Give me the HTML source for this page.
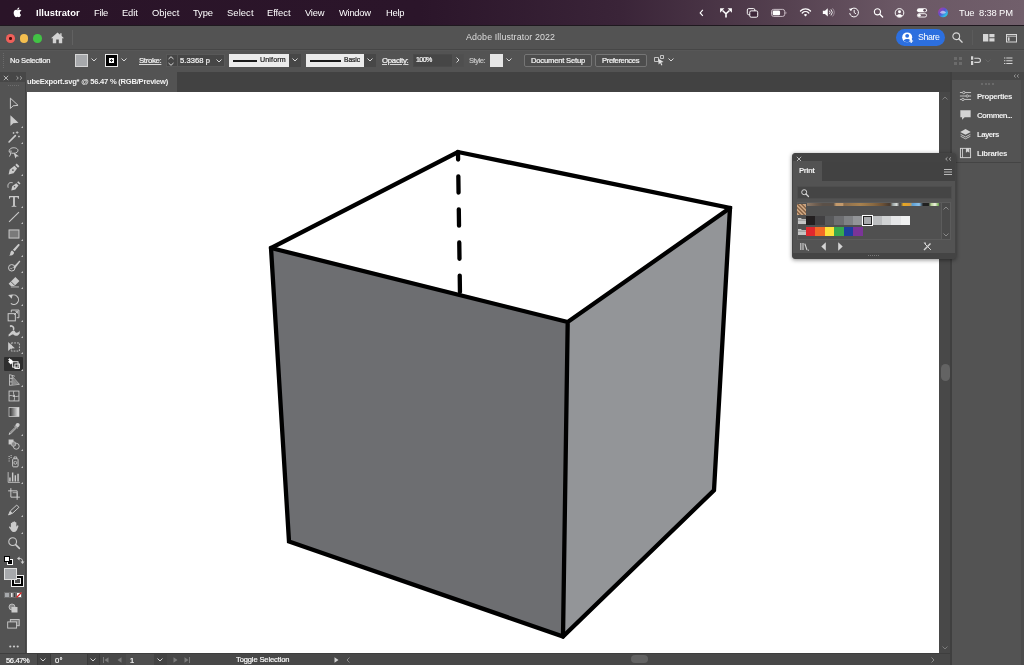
<!DOCTYPE html>
<html lang="en">
<head>
<meta charset="utf-8">
<title>Adobe Illustrator 2022</title>
<style>
*{box-sizing:border-box;margin:0;padding:0}
html,body{width:1024px;height:665px;overflow:hidden;background:#535353}
body{position:relative;font-family:"Liberation Sans",sans-serif;color:#e6e6e6;font-size:8px;-webkit-font-smoothing:antialiased}
.abs{position:absolute}
.t{position:absolute;white-space:nowrap;line-height:1;will-change:transform}
svg{position:absolute;overflow:visible}
/* ---------- mac menubar ---------- */
#menubar{left:0;top:0;width:1024px;height:25px;background:linear-gradient(90deg,#2a1428 0px,#2b152a 420px,#3a2438 620px,#54404f 780px,#6b5865 900px,#715f6b 1024px)}
#menubar .t{top:7px;font-size:9.6px;color:#fff;font-weight:400}
#menubar .b{font-weight:700}
/* ---------- title bar ---------- */
#titlebar{left:0;top:25px;width:1024px;height:24px;background:#535353;border-top:1px solid #1f181f}
/* ---------- control bar ---------- */
#controlbar{left:0;top:49px;width:1024px;height:23px;background:#535353;box-shadow:inset 0 1px 0 #464646, inset 0 2px 0 #575757}
#menubar svg{transform:translateY(.4px) scale(.88)}
#dock svg{transform:scale(.86)}
#controlbar .t{font-size:7.6px;color:#f4f4f4;top:8px;-webkit-text-stroke:.22px currentColor}
.fld{position:absolute;background:#464646;border:1px solid #585858;height:13px;top:5px}
.wbox{position:absolute;background:#ebebeb;height:13px;top:5px}
.btn{position:absolute;border:1px solid #757575;border-radius:2px;height:13px;top:5px;background:#4d4d4d}
.u{text-decoration:underline;text-decoration-thickness:.7px;text-underline-offset:1.2px;text-decoration-color:#d8d8d8}
/* ---------- tab bar ---------- */
#tabbar{left:0;top:72px;width:1024px;height:20px;background:#424242}
#tab{left:26px;top:0;width:151px;height:20px;background:#535353}
/* ---------- toolbar ---------- */
#tools{left:0;top:72px;width:26px;height:581px;background:#535353;border-right:1px solid #444}
#tools svg[width="16"]{transform:scale(.9)}
#toolhead{left:0;top:0;width:26px;height:10px;background:#474747}
/* ---------- canvas ---------- */
#canvas{left:27px;top:92px;width:912px;height:561px;background:#fff;overflow:hidden}
/* ---------- scrollbars / status ---------- */
#vscroll{left:939px;top:92px;width:11px;height:573px;background:#484848}
#status{left:0;top:653px;width:951px;height:12px;background:#484848;overflow:hidden}
#status .t{font-size:7.6px;top:3px;color:#fafafa;-webkit-text-stroke:.2px currentColor}
/* ---------- right dock ---------- */
#dock{left:950px;top:72px;width:74px;height:593px;background:#535353;border-left:2px solid #3f3f3f}
#dock .t{font-size:7.8px;font-weight:700;color:#f0f0f0}
/* ---------- floating panel ---------- */
#panel{left:792px;top:153px;width:164px;height:106px;background:#535353;box-shadow:0 1px 4px rgba(0,0,0,.45);border:1px solid #444;border-radius:3px}
</style>
</head>
<body>

<!-- ================= macOS menu bar ================= -->
<div id="menubar" class="abs">
  <svg style="left:13px;top:5.500px" width="9.500" height="12" viewBox="-8 -3 180 212"><path fill="#fff" d="M150 72c-9 6-22 18-22 42 0 28 24 38 25 38-1 3-5 16-14 29-8 12-17 24-30 24s-17-8-32-8c-15 0-20 8-32 8s-21-11-31-25C3 164-6 137-6 111c0-42 27-64 54-64 14 0 26 9 35 9 8 0 22-10 38-10 6 0 28 1 43 22zM103 33c7-8 11-19 11-30 0-2 0-3-1-4-11 0-24 7-31 16-6 7-12 18-12 29 0 2 0 3 1 4h3c10 0 22-7 29-15z"/></svg>
  <span class="t b" style="left:36.0px;top:7.5px;font-size:9.4px;letter-spacing:0.03px;font-weight:700">Illustrator</span>
  <span class="t" style="left:93.8px;top:7.5px;font-size:9.4px;letter-spacing:-0.29px">File</span>
  <span class="t" style="left:122.0px;top:7.5px;font-size:9.4px;letter-spacing:-0.14px">Edit</span>
  <span class="t" style="left:151.8px;top:7.5px;font-size:9.4px;letter-spacing:0.03px">Object</span>
  <span class="t" style="left:193.0px;top:7.5px;font-size:9.4px;letter-spacing:-0.11px">Type</span>
  <span class="t" style="left:226.5px;top:7.5px;font-size:9.4px;letter-spacing:0.09px">Select</span>
  <span class="t" style="left:266.5px;top:7.5px;font-size:9.4px;letter-spacing:-0.06px">Effect</span>
  <span class="t" style="left:305.0px;top:7.5px;font-size:9.4px;letter-spacing:-0.22px">View</span>
  <span class="t" style="left:339.0px;top:7.5px;font-size:9.4px;letter-spacing:-0.27px">Window</span>
  <span class="t" style="left:385.5px;top:7.5px;font-size:9.4px;letter-spacing:-0.26px">Help</span>
  <svg style="left:699px;top:8px" width="5" height="9" viewBox="0 0 5 9"><path d="M4 1 1 4.500 4 8" fill="none" stroke="#fff" stroke-width="1.300"/></svg>
  <svg style="left:719px;top:7px" width="14" height="11" viewBox="0 0 14 11"><path d="M7 10.800V6.500L3 2.800M7 6.500l4-3.700" fill="none" stroke="#fff" stroke-width="1.800"/><path d="M.3 5.200V.3h4.900zM13.700 5.200V.3H8.800z" fill="#fff"/></svg>
  <svg style="left:746px;top:7px" width="13" height="11" viewBox="0 0 13 11"><rect x=".6" y=".6" width="8.600" height="7" rx="1.600" fill="none" stroke="#fff" stroke-width="1.100"/><rect x="3.400" y="3.200" width="9" height="7.200" rx="1.600" fill="#3d2739" stroke="#fff" stroke-width="1.100"/></svg>
  <svg style="left:770px;top:8px" width="18" height="9" viewBox="0 0 18 9"><rect x=".5" y=".5" width="15" height="8" rx="2.400" fill="none" stroke="#d8ccd4" stroke-width="1"/><rect x="1.800" y="1.800" width="8.400" height="5.400" rx="1.300" fill="#fff"/><path d="M16.500 3v3c1.200-.4 1.200-2.600 0-3z" fill="#d8ccd4"/></svg>
  <svg style="left:799px;top:7px" width="13" height="10" viewBox="0 0 13 10"><path d="M.8 3.400a8.200 8.200 0 0 1 11.400 0M2.800 5.600a5.400 5.400 0 0 1 7.400 0" fill="none" stroke="#fff" stroke-width="1.500" stroke-linecap="round"/><path d="M4.600 7.600a2.800 2.800 0 0 1 3.800 0L6.500 9.600z" fill="#fff"/></svg>
  <svg style="left:822px;top:7px" width="14" height="10" viewBox="0 0 14 10"><path d="M0 3.200h2.400L5.600.4v9.200L2.400 6.800H0z" fill="#fff"/><path d="M7.400 3a3 3 0 0 1 0 4M9.200 1.600a5 5 0 0 1 0 6.800" fill="none" stroke="#fff" stroke-width="1"/><path d="M11 .4a7 7 0 0 1 0 9.200" fill="none" stroke="#a99aa5" stroke-width="1"/></svg>
  <svg style="left:848px;top:6px" width="12" height="12" viewBox="0 0 12 12"><path d="M2 3.200a5 5 0 1 1-.9 3.600" fill="none" stroke="#fff" stroke-width="1.100"/><path d="M.2 1.800 2.600 4.600 4.400 1.600z" fill="#fff"/><path d="M6.200 3.200v3l2 1.400" fill="none" stroke="#fff" stroke-width="1.100"/></svg>
  <svg style="left:873px;top:7px" width="11" height="11" viewBox="0 0 11 11"><circle cx="4.300" cy="4.300" r="3.500" fill="none" stroke="#fff" stroke-width="1.300"/><path d="M7 7l3.200 3.200" stroke="#fff" stroke-width="1.500" stroke-linecap="round"/></svg>
  <svg style="left:894px;top:7px" width="11" height="11" viewBox="0 0 11 11"><circle cx="5.500" cy="5.500" r="4.900" fill="none" stroke="#fff" stroke-width="1.100"/><circle cx="5.500" cy="4.200" r="1.700" fill="#fff"/><path d="M2.400 8.800c.6-2.400 5.600-2.400 6.200 0a4.600 4.600 0 0 1-6.200 0z" fill="#fff"/></svg>
  <svg style="left:916px;top:7px" width="12" height="11" viewBox="0 0 12 11"><rect x=".3" y=".3" width="11.400" height="4.600" rx="2.300" fill="#fff"/><circle cx="9" cy="2.600" r="1.500" fill="#5b4756"/><rect x=".8" y="6.400" width="10.400" height="3.800" rx="1.900" fill="none" stroke="#fff" stroke-width="1"/><circle cx="3" cy="8.300" r="1.600" fill="#fff"/></svg>
  <svg style="left:937px;top:6px" width="12" height="12" viewBox="0 0 12 12"><defs><linearGradient id="siri" x1="0" y1="0" x2="1" y2="1"><stop offset="0" stop-color="#c43a8e"/><stop offset=".45" stop-color="#5a4fd6"/><stop offset=".75" stop-color="#2fb6e8"/><stop offset="1" stop-color="#3fe0b0"/></linearGradient></defs><circle cx="6" cy="6" r="5.600" fill="url(#siri)"/><path d="M2.500 6.500c2-3 4.500-3 7 0-2.500 1.500-5 1.500-7 0z" fill="#fff" opacity=".55"/></svg>
  <span class="t" style="left:958.5px;top:7.5px;font-size:9.4px;letter-spacing:-0.18px">Tue&nbsp; 8:38 PM</span>
</div>

<!-- ================= title bar ================= -->
<div id="titlebar" class="abs">
  <div class="abs" style="left:6px;top:8px;width:8.500px;height:8.500px;border-radius:50%;background:#f0605a"></div>
  <div class="abs" style="left:9px;top:11px;width:2.500px;height:2.500px;border-radius:50%;background:#4a0d0a"></div>
  <div class="abs" style="left:19.700px;top:8px;width:8.500px;height:8.500px;border-radius:50%;background:#f5bf4f"></div>
  <div class="abs" style="left:33px;top:8px;width:8.500px;height:8.500px;border-radius:50%;background:#42c345"></div>
  <svg style="left:51px;top:6px" width="13" height="12" viewBox="0 0 13 12"><path d="M6.5 .4 0 6.2h1.8V11.3h3.4V7.6h2.6v3.7h3.4V6.2H13L10.6 4V1.2H9.2v1.6z" fill="#d2d2d2"/></svg>
  <div class="abs" style="left:72px;top:4px;width:1px;height:15px;background:#616161"></div>
  <span class="t" style="left:465.8px;top:7.2px;font-size:8.9px;letter-spacing:0.10px;color:#dcdcdc">Adobe Illustrator 2022</span>
  <!-- share -->
  <div class="abs" style="left:896px;top:2.500px;width:49px;height:17.500px;border-radius:9px;background:#2c6fdf"></div>
  <svg style="left:901.500px;top:5.500px" width="11.500" height="11.500" viewBox="0 0 12 12"><circle cx="5.4" cy="5.6" r="5.2" fill="#fff"/><circle cx="5.4" cy="4" r="2" fill="#2c6fdf"/><path d="M1.8 9.2c.5-2.6 6.700-2.600 7.200 0a5.200 5.200 0 0 1-7.200 0z" fill="#2c6fdf"/><path d="M9.600 7.400v4M7.600 9.400h4" stroke="#fff" stroke-width="1.200"/></svg>
  <span class="t" style="left:917.5px;top:7.4px;font-size:8.8px;letter-spacing:-0.42px;color:#fff">Share</span>
  <svg style="left:952px;top:6px" width="11" height="11" viewBox="0 0 13 13"><circle cx="5" cy="5" r="4" fill="none" stroke="#d6d6d6" stroke-width="1.300"/><path d="M8 8l4 4" stroke="#d6d6d6" stroke-width="1.600" stroke-linecap="round"/></svg>
  <div class="abs" style="left:972px;top:4px;width:1px;height:15px;background:#5b5b5b"></div>
  <svg style="left:982.500px;top:8px" width="11.500" height="7.500" viewBox="0 0 13 9" preserveAspectRatio="none"><path d="M0 0h6v9h-6zM7.200 0h5.800v4h-5.800zM7.200 5h5.800v4h-5.800z" fill="#d6d6d6"/></svg>
  <svg style="left:1006px;top:7.500px" width="11" height="8.500" viewBox="0 0 13 10" preserveAspectRatio="none"><rect x=".6" y=".6" width="11.800" height="8.800" fill="none" stroke="#d6d6d6" stroke-width="1.200"/><path d="M.6 2.600h11.800" stroke="#d6d6d6" stroke-width="1"/><path d="M2.200 4h2v4h-2z" fill="#d6d6d6"/></svg>
</div>

<!-- ================= control bar ================= -->
<div id="controlbar" class="abs">
  <div class="abs" style="left:3px;top:4px;width:2px;height:15px;border-left:1px dotted #6a6a6a"></div>
  <span class="t" style="left:10.4px;top:7.6px;font-size:7.6px;letter-spacing:-0.24px">No Selection</span>
  <!-- fill swatch -->
  <div class="abs" style="left:75px;top:5px;width:13px;height:13px;background:#a7a9ac;border:1px solid #d6d6d6"></div>
  <svg class="chev" style="left:91px;top:9px" width="6" height="4" viewBox="0 0 6 4"><path d="M.5 .5 3 3 5.5 .5" fill="none" stroke="#d8d8d8" stroke-width="1"/></svg>
  <!-- stroke swatch -->
  <div class="abs" style="left:105px;top:5px;width:13px;height:13px;background:#000;border:1px solid #e8e8e8"></div>
  <div class="abs" style="left:109px;top:9px;width:5px;height:5px;background:#fff"></div>
  <div class="abs" style="left:110px;top:11px;width:3px;height:1px;background:#333"></div>
  <div class="abs" style="left:111px;top:10px;width:1px;height:3px;background:#333"></div>
  <svg style="left:121px;top:9px" width="6" height="4" viewBox="0 0 6 4"><path d="M.5 .5 3 3 5.5 .5" fill="none" stroke="#d8d8d8" stroke-width="1"/></svg>
  <span class="t u" style="left:139.0px;top:7.7px;font-size:7.8px;letter-spacing:-0.33px">Stroke:</span>
  <!-- stepper + field -->
  <div class="fld" style="left:166px;width:11px;border-right:none"></div>
  <svg style="left:168px;top:7px" width="6" height="10" viewBox="0 0 6 10"><path d="M.5 3 3 .7 5.5 3M.5 7 3 9.3 5.5 7" fill="none" stroke="#d8d8d8" stroke-width="1"/></svg>
  <div class="fld" style="left:177px;width:36px"></div>
  <span class="t" style="left:180.0px;top:7.6px;font-size:7.6px;letter-spacing:0.06px">5.3368 p</span>
  <div class="fld" style="left:212px;width:13px;border-left:none"></div>
  <svg style="left:216px;top:9.500px" width="6" height="4" viewBox="0 0 6 4"><path d="M.5 .5 3 3 5.5 .5" fill="none" stroke="#d8d8d8" stroke-width="1"/></svg>
  <!-- uniform -->
  <div class="abs" style="left:289px;top:5px;width:12px;height:13px;background:#474747"></div>
  <div class="abs" style="left:364px;top:5px;width:12px;height:13px;background:#474747"></div>
  <div class="wbox" style="left:229px;width:60px"></div>
  <div class="abs" style="left:233px;top:11px;width:23.500px;height:1.500px;background:#1a1a1a"></div>
  <span class="t" style="left:259.8px;top:8.2px;font-size:7.1px;letter-spacing:0.15px;color:#222">Uniform</span>
  <svg style="left:292px;top:9px" width="6" height="4" viewBox="0 0 6 4"><path d="M.5 .5 3 3 5.5 .5" fill="none" stroke="#d8d8d8" stroke-width="1"/></svg>
  <!-- basic -->
  <div class="wbox" style="left:306px;width:58px"></div>
  <div class="abs" style="left:309.500px;top:10.500px;width:31.500px;height:2px;background:#1a1a1a"></div>
  <span class="t" style="left:343.6px;top:8.4px;font-size:6.7px;letter-spacing:-0.05px;color:#222">Basic</span>
  <svg style="left:367px;top:9px" width="6" height="4" viewBox="0 0 6 4"><path d="M.5 .5 3 3 5.5 .5" fill="none" stroke="#d8d8d8" stroke-width="1"/></svg>
  <span class="t u" style="left:382.0px;top:7.7px;font-size:7.8px;letter-spacing:-0.27px">Opacity:</span>
  <div class="fld" style="left:413px;width:40px;border-color:#4a4a4a"></div>
  <span class="t" style="left:416.0px;top:8.1px;font-size:7.1px;letter-spacing:-0.62px">100%</span>
  <div class="fld" style="left:452px;width:12px;border-color:#505050;background:#4f4f4f"></div>
  <svg style="left:456px;top:8px" width="4" height="6" viewBox="0 0 4 6"><path d="M.5 .5 3 3 .5 5.5" fill="none" stroke="#d8d8d8" stroke-width="1"/></svg>
  <span class="t" style="left:468.5px;top:7.6px;font-size:7.6px;letter-spacing:-0.50px;color:#c4c4c4">Style:</span>
  <div class="abs" style="left:490px;top:5px;width:13px;height:13px;background:#e6e6e6"></div>
  <svg style="left:506px;top:9px" width="6" height="4" viewBox="0 0 6 4"><path d="M.5 .5 3 3 5.5 .5" fill="none" stroke="#d8d8d8" stroke-width="1"/></svg>
  <div class="btn" style="left:524px;width:68px"></div>
  <span class="t" style="left:530.8px;top:7.7px;font-size:7.6px;letter-spacing:-0.18px">Document Setup</span>
  <div class="btn" style="left:595px;width:52px"></div>
  <span class="t" style="left:602.0px;top:7.7px;font-size:7.6px;letter-spacing:-0.35px">Preferences</span>
  <!-- select-similar icon -->
  <svg style="left:654px;top:6px" width="11" height="11" viewBox="0 0 11 11"><path d="M.5 2.5h4v4h-4z M6.5 .5h3v3h-3z" fill="none" stroke="#cfcfcf" stroke-width=".9"/><path d="M4.2 3.6 9.6 7 7.2 7.4 8.4 10 7.4 10.4 6.2 7.9 4.6 9.4z" fill="#e0e0e0"/></svg>
  <svg style="left:668px;top:9px" width="6" height="4" viewBox="0 0 6 4"><path d="M.5 .5 3 3 5.5 .5" fill="none" stroke="#d8d8d8" stroke-width="1"/></svg>
  <!-- right side icons -->
  <svg style="left:954px;top:8px" width="8" height="8" viewBox="0 0 8 8"><path d="M0 0h3v3h-3zM5 0h3v3h-3zM0 5h3v3h-3zM5 5h3v3h-3z" fill="#6b6b6b"/></svg>
  <svg style="left:970.500px;top:7px" width="11" height="9.500" viewBox="0 0 12 10"><path d="M0 0h2.4v4h-2.4zM0 5.4h2.4v4.2h-2.4z" fill="#d6d6d6"/><path d="M3.6 2.2h4.4a2 2 0 0 1 0 4.6h-4.4" fill="none" stroke="#d6d6d6" stroke-width="1.2"/></svg>
  <svg style="left:985px;top:10px" width="6" height="4" viewBox="0 0 6 4"><path d="M.5 .5 3 3 5.5 .5" fill="none" stroke="#636363" stroke-width="1"/></svg>
  <svg style="left:1004px;top:8px" width="8.500" height="7.500" viewBox="0 0 9 8"><path d="M0 1h1.4M2.4 1H9M0 4h1.4M2.4 4H9M0 7h1.4M2.4 7H9" stroke="#d6d6d6" stroke-width="1.1"/></svg>
</div>

<!-- ================= tab bar ================= -->
<div id="tabbar" class="abs">
  <div id="tab" class="abs"></div>
  <span class="t" style="left:27.0px;top:5.8px;font-size:7.6px;letter-spacing:-0.24px;font-weight:700;color:#f2f2f2">ubeExport.svg* @ 56.47 % (RGB/Preview)</span>
</div>

<!-- ================= canvas ================= -->
<div id="canvas" class="abs">
  <svg style="left:-27px;top:-92px" width="1024" height="665" viewBox="0 0 1024 665">
    <polygon points="271,248 567.7,322 563,636.5 289,541.5" fill="#6d6e71"/>
    <polygon points="567.7,322 730,208 714,490.3 563,636.5" fill="#939598"/>
    <g fill="none" stroke="#000" stroke-width="4.3" stroke-linejoin="miter" stroke-linecap="round">
      <polygon points="458,152 730,208 714,490.3 563,636.5 289,541.5 271,248"/>
      <path d="M271 248 567.7 322 730 208M567.7 322 563 636.5"/>
      <line x1="458" y1="152" x2="460" y2="295" stroke-dasharray="16.3 16.8" stroke-dashoffset="8.8"/>
    </g>
  </svg>
</div>

<!-- ================= scrollbars + status ================= -->
<div id="vscroll" class="abs">
  <svg style="left:2.500px;top:4px" width="6" height="4" viewBox="0 0 6 4"><path d="M.5 3.500 3 1 5.500 3.500" fill="none" stroke="#7c7c7c" stroke-width="1"/></svg>
  <svg style="left:2.500px;top:554px" width="6" height="4" viewBox="0 0 6 4"><path d="M.5 .5 3 3 5.500 .5" fill="none" stroke="#7c7c7c" stroke-width="1"/></svg>
  <div class="abs" style="left:2px;top:272px;width:9px;height:17px;border-radius:4.5px;background:#636363"></div>
</div>
<div id="status" class="abs">
  <div class="abs" style="left:0;top:0;width:951px;height:1px;background:#3e3e3e"></div>
  <div class="abs" style="left:0;top:1px;width:37px;height:11px;background:#4e4e4e"></div>
  <div class="abs" style="left:37px;top:1px;width:14px;height:11px;background:#434343;border-left:1px solid #3a3a3a;border-right:1px solid #3a3a3a"></div>
  <div class="abs" style="left:51px;top:1px;width:36px;height:11px;background:#4e4e4e"></div>
  <div class="abs" style="left:87px;top:1px;width:13px;height:11px;background:#434343;border-left:1px solid #3a3a3a;border-right:1px solid #3a3a3a"></div>
  <div class="abs" style="left:126px;top:1px;width:28px;height:11px;background:#4e4e4e"></div>
  <div class="abs" style="left:154px;top:1px;width:13px;height:11px;background:#434343"></div>
  <svg style="left:40px;top:5px" width="6" height="4" viewBox="0 0 6 4"><path d="M.5 .5 3 3 5.500 .5" fill="none" stroke="#d0d0d0" stroke-width="1"/></svg>
  <svg style="left:89.5px;top:5px" width="6" height="4" viewBox="0 0 6 4"><path d="M.5 .5 3 3 5.500 .5" fill="none" stroke="#d0d0d0" stroke-width="1"/></svg>
  <svg style="left:157px;top:5px" width="6" height="4" viewBox="0 0 6 4"><path d="M.5 .5 3 3 5.500 .5" fill="none" stroke="#d0d0d0" stroke-width="1"/></svg>
  <svg style="left:103px;top:4px" width="6" height="6" viewBox="0 0 6 6"><path d="M.5 0v6" stroke="#7a7a7a" stroke-width="1"/><path d="M5.500 .3v5.400L1.500 3z" fill="#7a7a7a"/></svg>
  <svg style="left:117px;top:4px" width="5" height="6" viewBox="0 0 5 6"><path d="M4.500 .3v5.400L.5 3z" fill="#7a7a7a"/></svg>
  <svg style="left:173px;top:4px" width="5" height="6" viewBox="0 0 5 6"><path d="M.5 .3v5.400L4.500 3z" fill="#7a7a7a"/></svg>
  <svg style="left:184px;top:4px" width="6" height="6" viewBox="0 0 6 6"><path d="M5.500 0v6" stroke="#7a7a7a" stroke-width="1"/><path d="M.5 .3v5.400L4.500 3z" fill="#7a7a7a"/></svg>
  <svg style="left:334px;top:4px" width="5" height="6" viewBox="0 0 5 6"><path d="M.5 .3v5.400L4.500 3z" fill="#d0d0d0"/></svg>
  <svg style="left:346px;top:4px" width="4" height="6" viewBox="0 0 4 6"><path d="M3.500 .5 1 3 3.500 5.500" fill="none" stroke="#8a8a8a" stroke-width="1"/></svg>
  <svg style="left:931px;top:4px" width="4" height="6" viewBox="0 0 4 6"><path d="M.5 .5 3 3 .5 5.500" fill="none" stroke="#8a8a8a" stroke-width="1"/></svg>
  <span class="t" style="left:5.6px;top:3.5px;font-size:7.5px;letter-spacing:-0.35px">56.47%</span>
  <span class="t" style="left:54.7px;top:3.5px;font-size:7.6px;letter-spacing:0.33px">0°</span>
  <span class="t" style="left:130.3px;top:3.5px;font-size:7.6px;letter-spacing:-0.73px">1</span>
  <span class="t" style="left:235.5px;top:3.4px;font-size:7.6px;letter-spacing:-0.15px">Toggle Selection</span>
  <div class="abs" style="left:631px;top:2px;width:17px;height:8px;border-radius:4px;background:#636363"></div>
</div>

<!-- ================= tools ================= -->
<div id="tools" class="abs">
  <div id="toolhead" class="abs"></div>
  <div class="abs" style="left:4px;top:285px;width:19px;height:14px;background:#2e2e2e;border-radius:1px"></div>
  <svg style="left:5.5px;top:24.0px" width="16" height="16" viewBox="0 0 16 16"><path d="M4 1.500 4 13 7 10 12.500 9.500z" fill="none" stroke="#cbcbcb" stroke-width="1.100" stroke-linejoin="round"/></svg>
  <svg style="left:5.5px;top:40.5px" width="16" height="16" viewBox="0 0 16 16"><path d="M4 1.500 4 13.500 7.200 10.400 13 10z" fill="#cbcbcb"/></svg>
  <svg style="left:21px;top:53.5px" width="2" height="2" viewBox="0 0 2 2"><path d="M2 0v2H0z" fill="#bdbdbd"/></svg>
  <svg style="left:5.5px;top:56.8px" width="16" height="16" viewBox="0 0 16 16"><path d="M2.500 13.500 9.500 6.500" stroke="#cbcbcb" stroke-width="1.800" stroke-linecap="round"/><path d="M11.500 1.500v3M10 3h3M13.500 6.500v2M12.500 7.500h2M7.500 2.500v2M6.500 3.500h2" stroke="#cbcbcb" stroke-width=".9"/></svg>
  <svg style="left:21px;top:69.8px" width="2" height="2" viewBox="0 0 2 2"><path d="M2 0v2H0z" fill="#bdbdbd"/></svg>
  <svg style="left:5.5px;top:72.7px" width="16" height="16" viewBox="0 0 16 16"><path d="M3 7.500C1.500 4 5 1.800 8.500 2.200S13.500 5 11.500 7 5.500 8.500 4 7.500 3.500 5.500 5.500 6" fill="none" stroke="#cbcbcb" stroke-width="1.100"/><path d="M7.500 7.500 13.500 11.500 10.800 11.800 9.600 14.200z" fill="#cbcbcb"/><path d="M4 8c.8 1.500-.2 3-1.500 4" fill="none" stroke="#cbcbcb" stroke-width="1"/></svg>
  <svg style="left:5.5px;top:88.6px" width="16" height="16" viewBox="0 0 16 16"><path d="M2 14 3.200 8.500 8.500 4.500 11.500 7.500 7.500 12.800z" fill="#cbcbcb"/><path d="M9.500 3.500 11 2 14 5 12.500 6.500z" fill="#cbcbcb"/><circle cx="6.800" cy="9.200" r="1" fill="#535353"/></svg>
  <svg style="left:21px;top:101.6px" width="2" height="2" viewBox="0 0 2 2"><path d="M2 0v2H0z" fill="#bdbdbd"/></svg>
  <svg style="left:5.5px;top:104.9px" width="16" height="16" viewBox="0 0 16 16"><path d="M5 14 6 9.500 10.500 6 13 8.500 9.500 13z" fill="#cbcbcb"/><path d="M11.500 5 12.800 3.700 15.200 6.200 14 7.500z" fill="#cbcbcb"/><path d="M1.500 11C.5 7 2.500 4.500 6.500 5.500" fill="none" stroke="#cbcbcb" stroke-width="1.100"/><circle cx="8.600" cy="10" r=".9" fill="#535353"/></svg>
  <svg style="left:5.5px;top:121.4px" width="16" height="16" viewBox="0 0 16 16"><path d="M2.500 2.500h11v3h-1l-.6-1.700H9v9.400l1.600.4v.9H5.400v-.9l1.600-.4V3.800H3.900L3.300 5.500h-.8z" fill="#cbcbcb"/></svg>
  <svg style="left:21px;top:134.4px" width="2" height="2" viewBox="0 0 2 2"><path d="M2 0v2H0z" fill="#bdbdbd"/></svg>
  <svg style="left:5.5px;top:137.4px" width="16" height="16" viewBox="0 0 16 16"><path d="M2.500 13.500 13.500 2.500" stroke="#cbcbcb" stroke-width="1.200"/></svg>
  <svg style="left:21px;top:150.4px" width="2" height="2" viewBox="0 0 2 2"><path d="M2 0v2H0z" fill="#bdbdbd"/></svg>
  <svg style="left:5.5px;top:153.9px" width="16" height="16" viewBox="0 0 16 16"><rect x="2.500" y="3.500" width="11" height="9" fill="#7a7a7a" stroke="#cbcbcb" stroke-width="1.100"/></svg>
  <svg style="left:21px;top:166.9px" width="2" height="2" viewBox="0 0 2 2"><path d="M2 0v2H0z" fill="#bdbdbd"/></svg>
  <svg style="left:5.5px;top:169.8px" width="16" height="16" viewBox="0 0 16 16"><path d="M13.800 1.500c.6.500.6 1 .2 1.600L8.800 9.500 6.800 7.800 12.500 1.700c.400-.5.900-.5 1.300-.2z" fill="#cbcbcb"/><path d="M6 8.600 8 10.400c.4 2-1.400 4-5.500 3.800 1.400-.8 1.200-2 1.500-3.200.3-1.200 1-2.200 2-2.400z" fill="#cbcbcb"/></svg>
  <svg style="left:21px;top:182.8px" width="2" height="2" viewBox="0 0 2 2"><path d="M2 0v2H0z" fill="#bdbdbd"/></svg>
  <svg style="left:5.5px;top:186.0px" width="16" height="16" viewBox="0 0 16 16"><circle cx="5.500" cy="10" r="3.600" fill="none" stroke="#cbcbcb" stroke-width="1.100"/><path d="M7 9.500 13.800 2.300c.5-.5 1.500.3 1 1L8.800 11z" fill="#cbcbcb"/><path d="M3.800 10.500c1 .8 2.200.4 2.600-.6" fill="none" stroke="#cbcbcb" stroke-width=".9"/></svg>
  <svg style="left:21px;top:199.0px" width="2" height="2" viewBox="0 0 2 2"><path d="M2 0v2H0z" fill="#bdbdbd"/></svg>
  <svg style="left:5.5px;top:202.0px" width="16" height="16" viewBox="0 0 16 16"><path d="M2 10 9.500 2.500 14 7 8.500 12.500H4.500z" fill="#cbcbcb"/><path d="M4.500 7.500 9 12" stroke="#535353" stroke-width="1"/><path d="M4.500 13.500h9" stroke="#cbcbcb" stroke-width="1"/></svg>
  <svg style="left:21px;top:215.0px" width="2" height="2" viewBox="0 0 2 2"><path d="M2 0v2H0z" fill="#bdbdbd"/></svg>
  <svg style="left:5.5px;top:218.6px" width="16" height="16" viewBox="0 0 16 16"><path d="M4.200 5A5.200 5.200 0 1 1 4.500 12.800" fill="none" stroke="#cbcbcb" stroke-width="1.200"/><path d="M1.500 3.500 6.500 3 5.500 7.800z" fill="#cbcbcb"/></svg>
  <svg style="left:21px;top:231.6px" width="2" height="2" viewBox="0 0 2 2"><path d="M2 0v2H0z" fill="#bdbdbd"/></svg>
  <svg style="left:5.5px;top:235.0px" width="16" height="16" viewBox="0 0 16 16"><rect x="1.500" y="6.500" width="8" height="8" fill="none" stroke="#cbcbcb" stroke-width="1.100"/><path d="M5 5V2.500h8.500V11H11" fill="none" stroke="#cbcbcb" stroke-width="1.100"/><path d="M8 8 12 4M12 4H9.500M12 4v2.500" fill="none" stroke="#cbcbcb" stroke-width="1"/></svg>
  <svg style="left:21px;top:248.0px" width="2" height="2" viewBox="0 0 2 2"><path d="M2 0v2H0z" fill="#bdbdbd"/></svg>
  <svg style="left:5.5px;top:251.0px" width="16" height="16" viewBox="0 0 16 16"><path d="M2 12c2-1 3-4 5-4.500 2.500-.5 2 2.500 4 2.500 1.500 0 2.500-1 3-2.500l.5 3C13 13 11 14 9 13c-1.500-.8-1.800-1.500-3-1-1.500.6-2 2-4 2z" fill="#cbcbcb"/><path d="M5.500 2.500c2 .5 2.500 2 2 4" fill="none" stroke="#cbcbcb" stroke-width="1.600" stroke-linecap="round"/><circle cx="4.500" cy="2.500" r="1.200" fill="#cbcbcb"/></svg>
  <svg style="left:21px;top:264.0px" width="2" height="2" viewBox="0 0 2 2"><path d="M2 0v2H0z" fill="#bdbdbd"/></svg>
  <svg style="left:5.5px;top:267.3px" width="16" height="16" viewBox="0 0 16 16"><rect x="5" y="3.500" width="9" height="9" fill="none" stroke="#cbcbcb" stroke-width="1" stroke-dasharray="2 1.200"/><path d="M1.500 2.500v10l3-2.800 4.500-.2z" fill="#cbcbcb"/></svg>
  <svg style="left:21px;top:280.3px" width="2" height="2" viewBox="0 0 2 2"><path d="M2 0v2H0z" fill="#bdbdbd"/></svg>
  <svg style="left:5.5px;top:283.8px" width="16" height="16" viewBox="0 0 16 16"><path d="M1.500 5.500 4.500 2.500 7.500 5.500 4.500 8.500z" fill="#fff"/><rect x="6.500" y="5.500" width="6" height="6" fill="#2e2e2e" stroke="#fff" stroke-width="1"/><rect x="9" y="8" width="5" height="5" fill="none" stroke="#fff" stroke-width="1"/><path d="M3 1.500v3M1.500 3h3" stroke="#fff" stroke-width=".8"/></svg>
  <svg style="left:21px;top:296.8px" width="2" height="2" viewBox="0 0 2 2"><path d="M2 0v2H0z" fill="#bdbdbd"/></svg>
  <svg style="left:5.5px;top:300.4px" width="16" height="16" viewBox="0 0 16 16"><path d="M3 2v12M6 2.800v10.800M3 2l6 1.800M3 6l4.500.6M3 10l3 .2M3 14l11-1.200L6 4" fill="none" stroke="#cbcbcb" stroke-width=".9"/><path d="M6.500 6 13 12.500 6.500 13.500z" fill="#8a8a8a"/></svg>
  <svg style="left:21px;top:313.4px" width="2" height="2" viewBox="0 0 2 2"><path d="M2 0v2H0z" fill="#bdbdbd"/></svg>
  <svg style="left:5.5px;top:316.3px" width="16" height="16" viewBox="0 0 16 16"><rect x="2.500" y="2.500" width="11" height="11" fill="none" stroke="#cbcbcb" stroke-width="1"/><path d="M2.500 8c3-2 5 2 11 0M8 2.500c-2 3 2 5 0 11" fill="none" stroke="#cbcbcb" stroke-width=".9"/><circle cx="8" cy="8" r="1.100" fill="#cbcbcb"/></svg>
  <svg style="left:5.5px;top:332.3px" width="16" height="16" viewBox="0 0 16 16"><defs><linearGradient id="gg" x1="0" y1="0" x2="1" y2="0"><stop offset="0" stop-color="#2a2a2a"/><stop offset="1" stop-color="#f2f2f2"/></linearGradient></defs><rect x="2.500" y="3" width="11" height="10" fill="url(#gg)" stroke="#cbcbcb" stroke-width=".9"/></svg>
  <svg style="left:5.5px;top:348.5px" width="16" height="16" viewBox="0 0 16 16"><path d="M10.500 2c1-1 2.500-.8 3.200 0 .8.800.8 2.200 0 3L12 6.700 9.300 4z" fill="#cbcbcb"/><path d="M8.500 4.500 11.500 7.500M9.500 6 3.500 12l-1 2 2-1 6-6" fill="none" stroke="#cbcbcb" stroke-width="1.100"/></svg>
  <svg style="left:21px;top:361.5px" width="2" height="2" viewBox="0 0 2 2"><path d="M2 0v2H0z" fill="#bdbdbd"/></svg>
  <svg style="left:5.5px;top:364.4px" width="16" height="16" viewBox="0 0 16 16"><rect x="2" y="3" width="5.500" height="5.500" fill="#cbcbcb"/><circle cx="10.500" cy="10.500" r="3.300" fill="none" stroke="#cbcbcb" stroke-width="1"/><circle cx="7.500" cy="8" r="2.600" fill="#8a8a8a" stroke="#cbcbcb" stroke-width=".8"/></svg>
  <svg style="left:21px;top:377.4px" width="2" height="2" viewBox="0 0 2 2"><path d="M2 0v2H0z" fill="#bdbdbd"/></svg>
  <svg style="left:5.5px;top:381.0px" width="16" height="16" viewBox="0 0 16 16"><rect x="6.500" y="5.500" width="6" height="9" rx="1" fill="none" stroke="#cbcbcb" stroke-width="1.100"/><circle cx="9.500" cy="10" r="1.600" fill="none" stroke="#cbcbcb" stroke-width=".9"/><path d="M8 5.500V3.500h3V5.500" fill="none" stroke="#cbcbcb" stroke-width="1"/><path d="M2 3h1.200M2 5.500h1.200M4.200 2h1.200M4.200 4.200h1.200M2 8h1.200" stroke="#cbcbcb" stroke-width="1.100"/></svg>
  <svg style="left:21px;top:394.0px" width="2" height="2" viewBox="0 0 2 2"><path d="M2 0v2H0z" fill="#bdbdbd"/></svg>
  <svg style="left:5.5px;top:397.0px" width="16" height="16" viewBox="0 0 16 16"><path d="M3.500 13V8.500M6.500 13V3M9.500 13V6M12.500 13V4.500" stroke="#cbcbcb" stroke-width="1.600"/><path d="M1.500 2.500v11.500h13" fill="none" stroke="#cbcbcb" stroke-width=".9"/></svg>
  <svg style="left:21px;top:410.0px" width="2" height="2" viewBox="0 0 2 2"><path d="M2 0v2H0z" fill="#bdbdbd"/></svg>
  <svg style="left:5.5px;top:414.0px" width="16" height="16" viewBox="0 0 16 16"><path d="M4.500 1.500v10h10M1.500 4.500h10v10" fill="none" stroke="#cbcbcb" stroke-width="1.100"/><path d="M6.500 6.500h5v5" fill="none" stroke="#cbcbcb" stroke-width=".8"/></svg>
  <svg style="left:5.5px;top:430.0px" width="16" height="16" viewBox="0 0 16 16"><path d="M2 13.500 4 9 11 2.500 13.500 5 6.500 11.500z" fill="none" stroke="#cbcbcb" stroke-width="1.100" stroke-linejoin="round"/><path d="M4 9 6.500 11.500 2 13.500z" fill="#cbcbcb"/></svg>
  <svg style="left:21px;top:443.0px" width="2" height="2" viewBox="0 0 2 2"><path d="M2 0v2H0z" fill="#bdbdbd"/></svg>
  <svg style="left:5.5px;top:446.7px" width="16" height="16" viewBox="0 0 16 16"><path d="M4.500 8.500V4c0-1 1.500-1 1.500 0V2.800c0-1 1.500-1 1.500 0V2.500c0-1 1.600-1 1.600 0v.8c0-1 1.500-1 1.500 0V8c.5-1 1.200-2.200 2-1.800.8.400 0 1.800-.4 2.800-.8 2-1.700 4.500-4.200 4.500H7.500C5.500 13.500 5 12 4 10.500 3.200 9.400 2 8.400 2.500 7.800c.6-.6 1.400 0 2 .7z" fill="#cbcbcb"/></svg>
  <svg style="left:21px;top:459.7px" width="2" height="2" viewBox="0 0 2 2"><path d="M2 0v2H0z" fill="#bdbdbd"/></svg>
  <svg style="left:5.5px;top:462.6px" width="16" height="16" viewBox="0 0 16 16"><circle cx="6.500" cy="6.500" r="4.300" fill="none" stroke="#cbcbcb" stroke-width="1.200"/><path d="M9.800 9.800 14 14" stroke="#cbcbcb" stroke-width="1.700" stroke-linecap="round"/></svg>
  <svg style="left:3px;top:3px" width="6" height="6" viewBox="0 0 6 6"><path d="M.8 .8 5.200 5.200M5.200 .8 .8 5.200" stroke="#bdbdbd" stroke-width=".9"/></svg>
  <svg style="left:16px;top:4px" width="7" height="4" viewBox="0 0 7 4"><path d="M.5 .3 2.300 2 .5 3.700M4 .3 5.800 2 4 3.700" fill="none" stroke="#bdbdbd" stroke-width=".8"/></svg>
  <div class="abs" style="left:8px;top:13px;width:11px;height:1px;border-top:1px dotted #6e6e6e"></div>
  <div class="abs" style="left:7px;top:487px;width:6px;height:6px;background:#000;border:1px solid #fff"></div>
  <div class="abs" style="left:4px;top:484px;width:6px;height:6px;background:#fff;border:1px solid #000"></div>
  <svg style="left:17px;top:484px" width="8" height="8" viewBox="0 0 8 8"><path d="M1.500 2.500C4.500 2 6 3.500 5.500 6.500" fill="none" stroke="#cbcbcb" stroke-width="1"/><path d="M0 2.500 2.500 .5v4zM5.500 8 3.500 5.500h4z" fill="#cbcbcb"/></svg>
  <div class="abs" style="left:11px;top:503px;width:13px;height:12px;background:#000;border:1px solid #f0f0f0"></div>
  <div class="abs" style="left:14px;top:506px;width:7px;height:6px;background:#535353;border:1px solid #f0f0f0"></div>
  <div class="abs" style="left:4px;top:496px;width:12.500px;height:12px;background:#a7a9ac;border:1px solid #dedede"></div>
  <div class="abs" style="left:4px;top:520px;width:6px;height:6px;background:#a7a9ac;border:1px solid #6b6b6b"></div>
  <div class="abs" style="left:10px;top:520px;width:6px;height:6px;background:linear-gradient(90deg,#fff,#222);border:1px solid #6b6b6b"></div>
  <div class="abs" style="left:16px;top:520px;width:6px;height:6px;background:#fff;border:1px solid #6b6b6b"></div>
  <svg style="left:16px;top:520px" width="6" height="6" viewBox="0 0 6 6"><path d="M.5 5.500 5.500 .5" stroke="#e02020" stroke-width="1.300"/></svg>
  <svg style="left:8px;top:531px" width="11" height="11" viewBox="0 0 11 11"><circle cx="4" cy="4" r="3" fill="#8a8a8a" stroke="#cbcbcb" stroke-width=".8"/><rect x="3.500" y="4" width="6" height="5.500" fill="#cbcbcb"/></svg>
  <svg style="left:7px;top:547px" width="13" height="10" viewBox="0 0 14 11"><rect x="3.500" y=".6" width="9.800" height="6.800" fill="#7a7a7a" stroke="#cbcbcb" stroke-width="1"/><rect x=".6" y="3.200" width="9.800" height="6.800" fill="#535353" stroke="#cbcbcb" stroke-width="1"/></svg>
  <svg style="left:9px;top:573px" width="10" height="3" viewBox="0 0 10 3"><circle cx="1.300" cy="1.500" r="1.100" fill="#cbcbcb"/><circle cx="5" cy="1.500" r="1.100" fill="#cbcbcb"/><circle cx="8.700" cy="1.500" r="1.100" fill="#cbcbcb"/></svg>
</div>

<!-- ================= right dock ================= -->
<div id="dock" class="abs">
  <div class="abs" style="left:0;top:0;width:73px;height:8px;background:#474747"></div>
  <svg style="left:61px;top:2px" width="7" height="4" viewBox="0 0 7 4"><path d="M2.500 .3 .7 2 2.500 3.700M6 .3 4.200 2 6 3.700" fill="none" stroke="#bdbdbd" stroke-width=".8"/></svg>
  <div class="abs" style="left:29px;top:11px;width:13px;height:2px;background:repeating-linear-gradient(90deg,#6a6a6a 0 2px,transparent 2px 3.600px)"></div>
  <div class="abs" style="left:0;top:90px;width:73px;height:1px;background:#444"></div>
  <div class="abs" style="left:69px;top:8px;width:3px;height:585px;background:#4c4c4c"></div>
  <!-- properties -->
  <svg style="left:7px;top:18px" width="13" height="12" viewBox="0 0 13 12"><path d="M0 2h3M6 2h7M0 6h7M10 6h3M0 10h2M5 10h8" stroke="#d4d4d4" stroke-width="1"/><circle cx="4.500" cy="2" r="1.400" fill="none" stroke="#d4d4d4" stroke-width=".9"/><circle cx="8.500" cy="6" r="1.400" fill="none" stroke="#d4d4d4" stroke-width=".9"/><circle cx="3.500" cy="10" r="1.400" fill="none" stroke="#d4d4d4" stroke-width=".9"/></svg>
  <!-- comments -->
  <svg style="left:7px;top:37px" width="13" height="12" viewBox="0 0 13 12"><path d="M.5 .5h12v8h-7l-3 3v-3h-2z" fill="#d4d4d4"/></svg>
  <!-- layers -->
  <svg style="left:7px;top:56px" width="13" height="12" viewBox="0 0 13 12"><path d="M6.500 .3 12.700 3.600 6.500 7 .3 3.600z" fill="#d4d4d4"/><path d="M.8 6.400 6.500 9.400 12.200 6.400M.8 8.600 6.500 11.600 12.200 8.600" fill="none" stroke="#d4d4d4" stroke-width="1"/></svg>
  <!-- libraries -->
  <svg style="left:7px;top:75px" width="13" height="12" viewBox="0 0 13 12"><rect x=".6" y=".6" width="11.800" height="10.800" fill="none" stroke="#d4d4d4" stroke-width="1.100"/><path d="M3 .6v10.800" stroke="#d4d4d4" stroke-width="1"/><path d="M7 .6h4v5l-2-1.400-2 1.400z" fill="#d4d4d4"/></svg>
  <span class="t" style="left:25.4px;top:21.0px;font-size:7.8px;letter-spacing:-0.35px;font-weight:700">Properties</span>
  <span class="t" style="left:25.4px;top:39.8px;font-size:7.8px;letter-spacing:-0.56px;font-weight:700">Commen...</span>
  <span class="t" style="left:25.4px;top:58.6px;font-size:7.8px;letter-spacing:-0.55px;font-weight:700">Layers</span>
  <span class="t" style="left:25.4px;top:77.7px;font-size:7.8px;letter-spacing:-0.33px;font-weight:700">Libraries</span>
</div>

<!-- ================= floating swatch panel ================= -->
<div id="panel" class="abs">
  <div class="abs" style="left:0;top:0;width:162px;height:8px;background:#434343;border-radius:2px 2px 0 0"></div>
  <svg style="left:3px;top:2px" width="6" height="6" viewBox="0 0 6 6"><path d="M.8 .8 5.200 5.200M5.200 .8 .8 5.200" stroke="#c8c8c8" stroke-width=".9"/></svg>
  <svg style="left:152px;top:3px" width="7" height="4" viewBox="0 0 7 4"><path d="M2.500 .3 .7 2 2.500 3.700M6 .3 4.200 2 6 3.700" fill="none" stroke="#bdbdbd" stroke-width=".8"/></svg>
  <div class="abs" style="left:0;top:8px;width:162px;height:19px;background:#424242"></div>
  <div class="abs" style="left:0;top:7px;width:28.500px;height:21px;background:#535353"></div>
  <span class="t" style="left:5.8px;top:13.4px;font-size:7.8px;letter-spacing:-0.47px;font-weight:700;color:#f2f2f2">Print</span>
  <svg style="left:151px;top:15px" width="8" height="6" viewBox="0 0 8 6"><path d="M0 .5h8M0 3h8M0 5.500h8" stroke="#c8c8c8" stroke-width=".9"/></svg>
  <div class="abs" style="left:4px;top:31.500px;width:155px;height:13px;background:#454545;border:1px solid #4e4e4e"></div>
  <svg style="left:8px;top:35px" width="8" height="8" viewBox="0 0 8 8"><circle cx="3.200" cy="3.200" r="2.500" fill="none" stroke="#d4d4d4" stroke-width="1"/><path d="M5 5l2.500 2.500" stroke="#d4d4d4" stroke-width="1.200" stroke-linecap="round"/></svg>
  <div class="abs" style="left:4px;top:48px;width:154px;height:38px;border:1px solid #5c5c5c;background:#505050"></div>
  <div class="abs" style="left:148px;top:49px;width:9px;height:36px;background:#4a4a4a;border-left:1px solid #5c5c5c"></div>
  <svg style="left:150px;top:52px" width="6" height="4" viewBox="0 0 6 4"><path d="M.5 3.500 3 1 5.500 3.500" fill="none" stroke="#8a8a8a" stroke-width="1"/></svg>
  <svg style="left:150px;top:79px" width="6" height="4" viewBox="0 0 6 4"><path d="M.5 .5 3 3 5.500 .5" fill="none" stroke="#8a8a8a" stroke-width="1"/></svg>
  <!-- row1 thumbnail + colour strip -->
  <div class="abs" style="left:4px;top:50px;width:9px;height:10.500px;background:#b08a68;background-image:repeating-linear-gradient(45deg,#c9a27e 0 1.500px,#8e6a4c 1.500px 3px),repeating-linear-gradient(-45deg,rgba(230,200,170,.6) 0 1px,transparent 1px 3px)"></div>
  <div class="abs" style="left:13.500px;top:49px;width:132px;height:2.500px;background:linear-gradient(90deg,#8f7a68 0,#6f5e50 7%,#5a5048 12%,#5a5048 20%,#c39a6c 22%,#c39a6c 27%,#8a6c4c 28%,#a8824f 40%,#8a6a42 50%,#6e5236 57%,#4a3c30 62%,#4a3c30 63%,#9aa6a8 65%,#d8dcd8 68%,#505050 70%,#505050 71%,#e8a820 73%,#d89a3a 78%,#5aa0d8 80%,#8cc0e8 85%,#202020 88%,#202020 92%,#b0d090 94%,#f0f0e0 97%,#60a040 100%)"></div>
  <!-- folder icons -->
  <svg style="left:5px;top:63.500px" width="8" height="6" viewBox="0 0 8 6"><path d="M0 0h3l.8 1H8v5H0z" fill="#c4c4c4"/><path d="M0 2.200h8" stroke="#777" stroke-width=".6"/></svg>
  <svg style="left:5px;top:74.500px" width="8" height="6" viewBox="0 0 8 6"><path d="M0 0h3l.8 1H8v5H0z" fill="#c4c4c4"/><path d="M0 2.200h8" stroke="#777" stroke-width=".6"/></svg>
  <div class="abs" style="left:13.00px;top:61.500px;width:9.500px;height:9.500px;background:#231f20"></div>
  <div class="abs" style="left:22.46px;top:61.500px;width:9.500px;height:9.500px;background:#414042"></div>
  <div class="abs" style="left:31.92px;top:61.500px;width:9.500px;height:9.500px;background:#58595b"></div>
  <div class="abs" style="left:41.38px;top:61.500px;width:9.500px;height:9.500px;background:#6d6e71"></div>
  <div class="abs" style="left:50.84px;top:61.500px;width:9.500px;height:9.500px;background:#808285"></div>
  <div class="abs" style="left:60.30px;top:61.500px;width:9.500px;height:9.500px;background:#939598"></div>
  <div class="abs" style="left:69.76px;top:61.500px;width:9.500px;height:9.500px;background:#a7a9ac"></div>
  <div class="abs" style="left:79.22px;top:61.500px;width:9.500px;height:9.500px;background:#bcbec0"></div>
  <div class="abs" style="left:88.68px;top:61.500px;width:9.500px;height:9.500px;background:#d1d3d4"></div>
  <div class="abs" style="left:98.14px;top:61.500px;width:9.500px;height:9.500px;background:#e6e7e8"></div>
  <div class="abs" style="left:107.60px;top:61.500px;width:9.500px;height:9.500px;background:#f1f2f2"></div>
  <div class="abs" style="left:69.26px;top:61px;width:10.500px;height:10.500px;border:1px solid #fff;outline:1px solid #222;outline-offset:-2px"></div>
  <div class="abs" style="left:13.00px;top:72.500px;width:9.500px;height:9.500px;background:#e0282e"></div>
  <div class="abs" style="left:22.46px;top:72.500px;width:9.500px;height:9.500px;background:#f26b27"></div>
  <div class="abs" style="left:31.92px;top:72.500px;width:9.500px;height:9.500px;background:#fde23a"></div>
  <div class="abs" style="left:41.38px;top:72.500px;width:9.500px;height:9.500px;background:#37a84e"></div>
  <div class="abs" style="left:50.84px;top:72.500px;width:9.500px;height:9.500px;background:#1d3f9f"></div>
  <div class="abs" style="left:60.30px;top:72.500px;width:9.500px;height:9.500px;background:#7b3498"></div>
  <!-- bottom toolbar -->
  <svg style="left:7px;top:88px" width="9" height="9" viewBox="0 0 9 9"><path d="M.8 1v7M3 1v7" stroke="#d4d4d4" stroke-width="1.100"/><path d="M4.800 1.600 7 8" stroke="#d4d4d4" stroke-width="1.100"/><circle cx="8.300" cy="8.200" r=".6" fill="#d4d4d4"/></svg>
  <svg style="left:28px;top:88px" width="5" height="9" viewBox="0 0 5 9"><path d="M4.800 .3v8.400L.3 4.500z" fill="#d4d4d4"/></svg>
  <svg style="left:45px;top:88px" width="5" height="9" viewBox="0 0 5 9"><path d="M.2 .3v8.400L4.700 4.500z" fill="#d4d4d4"/></svg>
  <svg style="left:130px;top:88px" width="9" height="9" viewBox="0 0 9 9"><path d="M1 8 7.500 1.500" stroke="#d4d4d4" stroke-width="1.400"/><path d="M1.500 1.500 8 8" stroke="#d4d4d4" stroke-width="1"/><path d="M.5 .5h2.400v2.400z" fill="#d4d4d4"/></svg>
  <div class="abs" style="left:0;top:99px;width:162px;height:5px;background:#444"></div>
  <div class="abs" style="left:75px;top:101px;width:11px;height:1px;border-top:1px dotted #777"></div>
</div>

</body>
</html>
